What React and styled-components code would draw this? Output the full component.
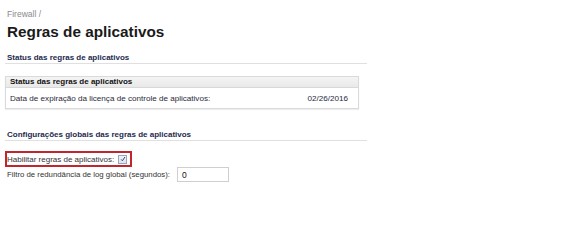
import React from "react";
import styled, { createGlobalStyle } from "styled-components";

const Global = createGlobalStyle`
  html, body { margin: 0; padding: 0; background: #fff; }
  body { font-family: "Liberation Sans", Arial, sans-serif; width: 576px; height: 216px; overflow: hidden; }
`;

const Page = styled.div`
  padding: 9px 0 0 5px;
  width: 362px;
  display: flex;
  flex-direction: column;
`;

const Crumb = styled.div`
  font-size: 8.5px;
  color: #8a8a8a;
  padding-left: 2px;
  line-height: 10px;
`;

const Title = styled.h1`
  margin: 4px 0 0;
  padding-left: 2px;
  font-size: 15.3px;
  font-weight: bold;
  color: #1a1a1a;
  line-height: 18px;
`;

const SectionHead = styled.div`
  margin-top: ${(p) => p.$top}px;
  padding: 0 0 0 2px;
  font-size: 8px;
  font-weight: bold;
  color: #1e2a4e;
  line-height: 11px;
  border-bottom: 1px solid #e0e0e0;
`;

const Box = styled.div`
  margin-top: 12px;
  width: 352px;
  border: 1px solid #dadada;
  box-shadow: 0 1px 1px #eee;
  display: flex;
  flex-direction: column;
`;

const BoxHead = styled.div`
  background: linear-gradient(#f4f4f4, #e9e9e9);
  border-bottom: 1px solid #d8d8d8;
  font-size: 8px;
  font-weight: bold;
  color: #111;
  padding: 0 4px;
  line-height: 10px;
`;

const BoxRow = styled.div`
  display: flex;
  justify-content: space-between;
  align-items: center;
  font-size: 8.1px;
  color: #2a2a3a;
  padding: 0 10px 0 4px;
  height: 20px;
`;

const Form = styled.div`
  margin-top: 10px;
  display: flex;
  flex-direction: column;
`;

const Highlight = styled.div`
  width: 123px;
  height: 12px;
  border: 2px solid #c0262e;
  display: flex;
  align-items: center;
  padding-left: 0;
`;

const Label = styled.span`
  font-size: ${(p) => p.$size || 8}px;
  color: #333;
  white-space: nowrap;
`;

const Check = styled.span`
  width: 7px;
  height: 7px;
  margin-left: 4px;
  border: 1px solid #9aa6b8;
  background: linear-gradient(#eef2f7, #dfe5ee);
  display: flex;
  align-items: center;
  justify-content: center;
`;

const FieldRow = styled.div`
  display: flex;
  align-items: center;
  padding-left: 2px;
`;

const Input = styled.div`
  margin-left: 7px;
  width: 52px;
  height: 15px;
  border: 1px solid #cfcfcf;
  font-size: 8.5px;
  color: #111;
  display: flex;
  align-items: center;
  padding-left: 4px;
  box-sizing: border-box;
`;

export default function App() {
  return (
    <>
      <Global />
      <Page>
        <Crumb>Firewall /</Crumb>
        <Title>Regras de aplicativos</Title>
        <SectionHead $top={11}>Status das regras de aplicativos</SectionHead>
        <Box>
          <BoxHead>Status das regras de aplicativos</BoxHead>
          <BoxRow>
            <span>Data de expiração da licença de controle de aplicativos:</span>
            <span>02/26/2016</span>
          </BoxRow>
        </Box>
        <SectionHead $top={20}>Configurações globais das regras de aplicativos</SectionHead>
        <Form>
          <Highlight>
            <Label>Habilitar regras de aplicativos:</Label>
            <Check>
              <svg width="6" height="6" viewBox="0 0 6 6">
                <path d="M1.2 3.4 L2.4 4.8 L4.9 1" stroke="#3b4f7a" strokeWidth="1" fill="none" />
              </svg>
            </Check>
          </Highlight>
          <FieldRow>
            <Label $size={7.8}>Filtro de redundância de log global (segundos):</Label>
            <Input>0</Input>
          </FieldRow>
        </Form>
      </Page>
    </>
  );
}
